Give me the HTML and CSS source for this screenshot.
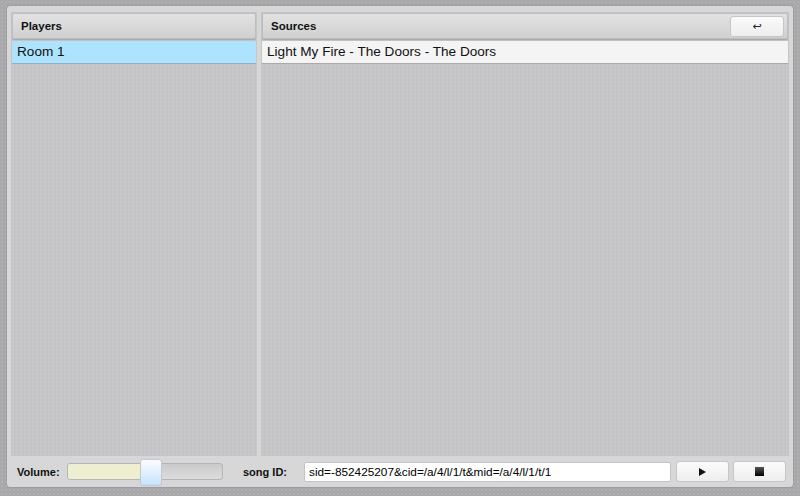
FILE: index.html
```html
<!DOCTYPE html>
<html lang="en">
<head>
  <meta charset="UTF-8">
  <title>Players</title>
  <link rel="stylesheet" href="styles.css">
</head>
<body>
  <div class="panel">
    <div class="columns">
      <div class="column players">
        <div class="header">Players</div>
        <div class="row selected">Room 1</div>
      </div>
      <div class="column sources">
        <div class="header">
          <span>Sources</span>
          <button class="btn back">&#x21A9;</button>
        </div>
        <div class="row">Light My Fire - The Doors - The Doors</div>
      </div>
    </div>
    <div class="footer">
      <label class="lbl">Volume:</label>
      <div class="slider">
        <div class="fill" style="width: 47%"></div>
        <div class="thumb"></div>
      </div>
      <label class="lbl song">song ID:</label>
      <input type="text" class="songid" value="sid=-852425207&amp;cid=/a/4/l/1/t&amp;mid=/a/4/l/1/t/1">
      <button class="btn ctl"><svg width="9" height="10" viewBox="0 0 9 10"><path d="M1 1 L8 5 L1 9 Z" fill="#111"/></svg></button>
      <button class="btn ctl"><span class="stop"></span></button>
    </div>
  </div>
</body>
</html>
```

FILE: styles.css
```css
body {
  margin: 0;
  height: 496px;
  background-color: #a8a8aa;
  background-image: radial-gradient(#b0b0b2 0.7px, transparent 1px);
  background-size: 4px 4px;
  font-family: "Liberation Sans", Arial, sans-serif;
  color: #111;
  overflow: hidden;
}

.panel {
  margin: 6px 0 0 7px;
  width: 786px;
  height: 481px;
  box-sizing: border-box;
  background: #d7d7d8;
  border-radius: 3px;
  padding: 6px 4px 0 4px;
  display: flex;
  flex-direction: column;
  box-shadow: 0 0 2px rgba(0, 0, 0, 0.25);
}

.columns {
  display: flex;
  gap: 4px;
  height: 444px;
}

.column {
  background-color: #c5c5c7;
  background-image: radial-gradient(#cacacc 0.7px, transparent 1px);
  background-size: 4px 4px;
  padding: 1px;
  box-sizing: border-box;
}

.players {
  width: 246px;
}

.sources {
  flex: 1;
}

.header {
  height: 26px;
  box-sizing: border-box;
  background: linear-gradient(#e2e2e3, #d0d0d1);
  border: 1px solid #bdbdbf;
  border-radius: 2px;
  box-shadow: 0 1px 1px rgba(0, 0, 0, 0.15);
  font-size: 11.5px;
  font-weight: bold;
  padding: 0 8px;
  display: flex;
  align-items: center;
  justify-content: space-between;
  margin-bottom: 2px;
}

.row {
  height: 22px;
  line-height: 22px;
  font-size: 13.6px;
  padding: 0 5px;
  background: #f4f4f4;
  border-bottom: 1px solid #a9a9ab;
}

.row.selected {
  background: #ade3fd;
  border-bottom-color: #8fb2c4;
}

.btn {
  font-family: "DejaVu Sans", sans-serif;
  background: linear-gradient(#fbfbfb, #ededee);
  border: 1px solid #c6c6c8;
  border-radius: 3px;
  padding: 0;
  display: flex;
  align-items: center;
  justify-content: center;
}

.back {
  width: 54px;
  height: 21px;
  margin-right: -5px;
  font-size: 11px;
  color: #223;
}

.footer {
  flex: 1;
  display: flex;
  align-items: center;
  padding: 0 0 0 6px;
}

.lbl {
  font-size: 11px;
  font-weight: bold;
  width: 50px;
}

.song {
  width: 61px;
  margin-left: 20px;
}

.slider {
  position: relative;
  width: 156px;
  height: 17px;
  box-sizing: border-box;
  border: 1px solid #b5b5b7;
  border-radius: 3px;
  background: linear-gradient(#cacacb, #dcdcdd);
}

.fill {
  height: 100%;
  background: #eeeed0;
  border-radius: 2px 0 0 2px;
}

.thumb {
  position: absolute;
  left: 72px;
  top: -5px;
  width: 20px;
  height: 25px;
  border: 1px solid #c0c8d0;
  border-radius: 3px;
  background: linear-gradient(#fbfdff, #c6e2fb);
}

.songid {
  width: 367px;
  height: 20px;
  box-sizing: border-box;
  border: 1px solid #c4c4c6;
  border-radius: 2px;
  font-family: "Liberation Sans", Arial, sans-serif;
  font-size: 11.8px;
  padding: 0 4px;
  background: #fff;
}

.ctl {
  width: 53px;
  height: 21px;
  margin-left: 5px;
}

.ctl + .ctl {
  margin-left: 4px;
}

.stop {
  width: 9px;
  height: 9px;
  background: linear-gradient(#555, #000);
}
```
